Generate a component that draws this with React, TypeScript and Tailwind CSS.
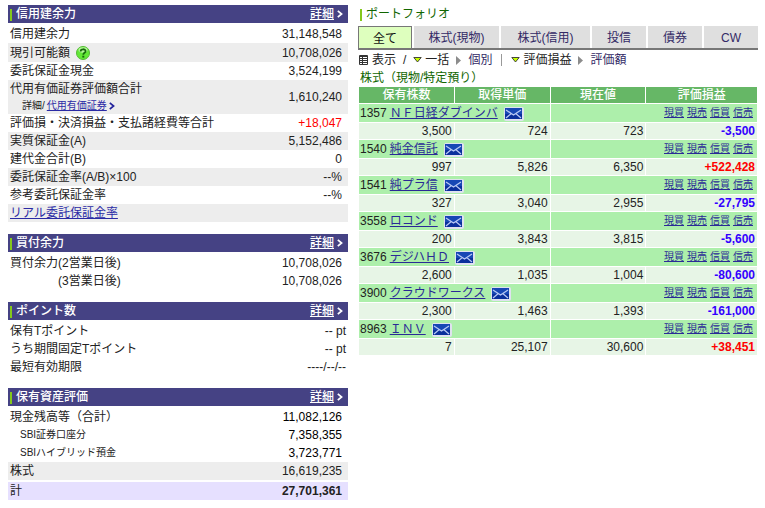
import type { ReactNode } from 'react'

type Row = {
  label: ReactNode
  value?: string
  shaded?: boolean
  indent?: string
  valueClass?: string
  small?: boolean
}

const marginRows: Row[] = [
  { label: '信用建余力', value: '31,148,548' },
  {
    label: (
      <span className="flex h-[19px] items-center gap-1.5">
        現引可能額 <HelpIcon />
      </span>
    ),
    value: '10,708,026',
    shaded: true,
  },
  { label: '委託保証金現金', value: '3,524,199' },
  {
    label: (
      <>
        代用有価証券評価額合計
        <span className="flex items-center gap-0.5 pl-3 text-[10px] leading-4">
          詳細/
          <a href="#collateral" className="text-[#2a2aa5] underline">
            代用有価証券
          </a>
          <Chevron className="text-[#22229c]" />
        </span>
      </>
    ),
    value: '1,610,240',
    shaded: true,
  },
  {
    label: '評価損・決済損益・支払諸経費等合計',
    value: '+18,047',
    valueClass: 'pr-1.5 text-[#ff0000]',
  },
  { label: '実質保証金(A)', value: '5,152,486', shaded: true },
  { label: '建代金合計(B)', value: '0' },
  { label: '委託保証金率(A/B)×100', value: '--%', shaded: true },
  { label: '参考委託保証金率', value: '--%' },
  {
    label: (
      <a href="#realtime" className="text-[#2a2aa5] underline">
        リアル委託保証金率
      </a>
    ),
    shaded: true,
  },
]

const buyingRows: Row[] = [
  { label: '買付余力(2営業日後)', value: '10,708,026' },
  { label: '(3営業日後)', value: '10,708,026', indent: 'pl-[50px]' },
]

const pointRows: Row[] = [
  { label: '保有Tポイント', value: '-- pt', valueClass: 'pr-0.5' },
  { label: 'うち期間固定Tポイント', value: '-- pt', valueClass: 'pr-0.5' },
  { label: '最短有効期限', value: '----/--/--', valueClass: 'pr-0.5' },
]

const assetRows: Row[] = [
  { label: '現金残高等（合計）', value: '11,082,126', valueClass: 'pr-1.5 text-black' },
  { label: 'SBI証券口座分', value: '7,358,355', indent: 'pl-3', small: true, valueClass: 'pr-1.5 text-black' },
  { label: 'SBIハイブリッド預金', value: '3,723,771', indent: 'pl-3', small: true, valueClass: 'pr-1.5 text-black' },
  { label: '株式', value: '16,619,235', shaded: true },
]

const holdings = [
  { code: '1357', name: 'ＮＦ日経ダブインバ', qty: '3,500', cost: '724', price: '723', pl: '-3,500' },
  { code: '1540', name: '純金信託', qty: '997', cost: '5,826', price: '6,350', pl: '+522,428' },
  { code: '1541', name: '純プラ信', qty: '327', cost: '3,040', price: '2,955', pl: '-27,795' },
  { code: '3558', name: 'ロコンド', qty: '200', cost: '3,843', price: '3,815', pl: '-5,600' },
  { code: '3676', name: 'デジハＨＤ', qty: '2,600', cost: '1,035', price: '1,004', pl: '-80,600' },
  { code: '3900', name: 'クラウドワークス', qty: '2,300', cost: '1,463', price: '1,393', pl: '-161,000' },
  { code: '8963', name: 'ＩＮＶ', qty: '7', cost: '25,107', price: '30,600', pl: '+38,451' },
]

const tabs = ['全て', '株式(現物)', '株式(信用)', '投信', '債券', 'CW']
const actions = ['現買', '現売', '信買', '信売']

function HelpIcon() {
  return (
    <svg width="14" height="14" viewBox="0 0 14 14" aria-hidden="true">
      <circle cx="7" cy="7" r="6.5" fill="#62e835" stroke="#55b936" />
      <ellipse cx="7" cy="4" rx="4.5" ry="2.8" fill="#b4f79a" />
      <path
        d="M4.6 5.4C4.6 2.6 9.6 2.6 9.6 5.2C9.6 6.9 7.3 6.8 7.3 8.7"
        fill="none"
        stroke="#176b0c"
        strokeWidth="1.8"
      />
      <rect x="6.3" y="9.7" width="2" height="1.9" fill="#176b0c" />
    </svg>
  )
}

function Chevron({ className }: { className?: string }) {
  return (
    <svg width="6" height="8" viewBox="0 0 6 8" className={className} aria-hidden="true">
      <path d="M.8 .8L4.6 4L.8 7.2" fill="none" stroke="currentColor" strokeWidth="1.7" />
    </svg>
  )
}

function MailIcon() {
  return (
    <svg width="20" height="14" viewBox="0 0 20 14" aria-hidden="true">
      <rect x="0" y="0" width="20" height="14" rx="2" fill="#dfe2ef" />
      <rect x="1" y="1" width="17" height="11" fill="#1747b5" />
      <path d="M1 7H18V12H1Z" fill="#0a2f9c" />
      <path d="M2 3L9.5 8L17 3M2 11L7 6.8M17 11L12 6.8" fill="none" stroke="#b9c9f5" strokeWidth="1.2" />
    </svg>
  )
}

function ListIcon() {
  return (
    <svg width="10" height="11" viewBox="0 0 10 11" aria-hidden="true">
      <path d="M.5 .5H8.5V9.5H.5ZM0 1.5H9M0 3.5H9M0 5.5H9M0 7.5H9M3.5 1V9" fill="none" stroke="#333" />
    </svg>
  )
}

function DownArrow() {
  return (
    <svg width="9" height="6" viewBox="0 0 9 6" aria-hidden="true">
      <path d="M.8 .5H8.2L4.5 5Z" fill="#c8ff00" stroke="#333" strokeWidth=".9" />
    </svg>
  )
}

function RightArrow() {
  return (
    <svg width="5" height="9" viewBox="0 0 5 9" aria-hidden="true">
      <path d="M0 0L5 4.5L0 9Z" fill="#8c8c8c" />
    </svg>
  )
}

function Panel({ title, rows, total }: { title: string; rows: Row[]; total?: string }) {
  return (
    <section>
      <header className="mb-0.5 flex h-[18px] items-center bg-[#454284] pr-[5px] pl-0.5 text-white">
        <span className="mt-0.5 h-3 w-0.5 bg-[#84c81c]" />
        <h2 className="ml-1 font-medium">{title}</h2>
        <a href="#detail" className="ml-auto font-medium underline">
          詳細
        </a>
        <Chevron className="ml-[3px]" />
      </header>
      <table className="w-full border-separate border-spacing-0">
        <tbody>
          {rows.map((row, i) => (
            <tr key={i} className={row.shaded ? 'bg-[#ededed]' : undefined}>
              <th
                scope="row"
                className={`${row.indent ?? 'pl-0.5'} ${row.small ? 'text-[10px]' : ''} text-left font-normal`}
              >
                {row.label}
              </th>
              <td className={`${row.valueClass ?? 'pr-1.5'} text-right`}>{row.value}</td>
            </tr>
          ))}
        </tbody>
        {total && (
          <tfoot>
            <tr className="bg-[#e6e0ff]">
              <th scope="row" className="border-t-2 border-white pl-0.5 text-left font-normal">
                計
              </th>
              <td className="border-t-2 border-white pr-1.5 text-right font-bold">{total}</td>
            </tr>
          </tfoot>
        )}
      </table>
    </section>
  )
}

function Holding({ item }: { item: (typeof holdings)[number] }) {
  return (
    <>
      <tr className="bg-[#adefab]">
        <td colSpan={2} className="pl-px leading-[18px]">
          <div className="flex h-[18px] items-center">
            {item.code}
            <a href={`#${item.code}`} className="ml-[3px] text-[#2a2a96] underline">
              {item.name}
            </a>
            <span className="mt-0.5 ml-1.5">
              <MailIcon />
            </span>
          </div>
        </td>
        <td colSpan={2} className="pr-1 leading-[18px]">
          <div className="flex h-[18px] items-center justify-end gap-[3px] text-[10px]">
            {actions.map((action) => (
              <a key={action} href={`#${item.code}`} className="text-[#2a2a96] underline">
                {action}
              </a>
            ))}
          </div>
        </td>
      </tr>
      <tr className="bg-[#e7f5e6] text-right leading-4">
        <td className="pr-0.5">{item.qty}</td>
        <td className="pr-0.5">{item.cost}</td>
        <td className="pr-0.5">{item.price}</td>
        <td
          className={`pr-0.5 font-bold ${item.pl.startsWith('+') ? 'text-[#ff0000]' : 'text-[#3300ff]'}`}
        >
          {item.pl}
        </td>
      </tr>
    </>
  )
}

export default function App() {
  return (
    <main className="grid grid-cols-[340fr_400fr] items-start gap-x-2.5 bg-white pt-[5px] pr-[7px] pl-2 font-['Liberation_Sans','Noto_Sans_CJK_JP',sans-serif] text-[12px] leading-[18px] whitespace-nowrap text-[#222]">
      <div className="flex flex-col gap-3">
        <Panel title="信用建余力" rows={marginRows} />
        <Panel title="買付余力" rows={buyingRows} />
        <Panel title="ポイント数" rows={pointRows} />
        <Panel title="保有資産評価" rows={assetRows} total="27,701,361" />
      </div>

      <section>
        <div className="flex items-center pl-0.5">
          <span className="mt-0.5 h-3 w-0.5 bg-[#84c81c]" />
          <h2 className="ml-1 text-[#116600]">ポートフォリオ</h2>
        </div>

        <nav className="mt-[3px] grid h-6 grid-cols-[54fr_85fr_89fr_54fr_54fr_54fr] gap-x-0.5 border-b-2 border-[#777]">
          {tabs.map((tab, i) => (
            <button
              key={tab}
              type="button"
              className={
                i === 0
                  ? 'border border-b-0 border-[#777] bg-[#deffbe] pt-0.5 text-[#111]'
                  : 'bg-[#dfdfdf] pt-px text-[#332a66]'
              }
            >
              {tab}
            </button>
          ))}
        </nav>

        <div className="flex h-5 items-center pl-px">
          <ListIcon />
          <span className="ml-[3px]">表示</span>
          <span className="mx-[7px]">/</span>
          <DownArrow />
          <span className="ml-[3px]">一括</span>
          <span className="mx-[7px]">
            <RightArrow />
          </span>
          <a href="#each" className="text-[#332a66]">
            個別
          </a>
          <span className="mx-[9px] h-3 w-px bg-[#999]" />
          <DownArrow />
          <span className="ml-[3px]">評価損益</span>
          <span className="mx-[7px]">
            <RightArrow />
          </span>
          <a href="#value" className="text-[#332a66]">
            評価額
          </a>
        </div>

        <h3 className="pl-0.5 leading-4 text-[#116600]">株式（現物/特定預り）</h3>
        <table className="w-full table-fixed border-separate border-spacing-px">
          <thead>
            <tr className="bg-[#66b766] leading-4 text-white">
              <th className="w-[24%] font-medium">保有株数</th>
              <th className="w-[24%] font-medium">取得単価</th>
              <th className="w-[24%] font-medium">現在値</th>
              <th className="font-medium">評価損益</th>
            </tr>
          </thead>
          <tbody>
            {holdings.map((item) => (
              <Holding key={item.code} item={item} />
            ))}
          </tbody>
        </table>
      </section>
    </main>
  )
}
